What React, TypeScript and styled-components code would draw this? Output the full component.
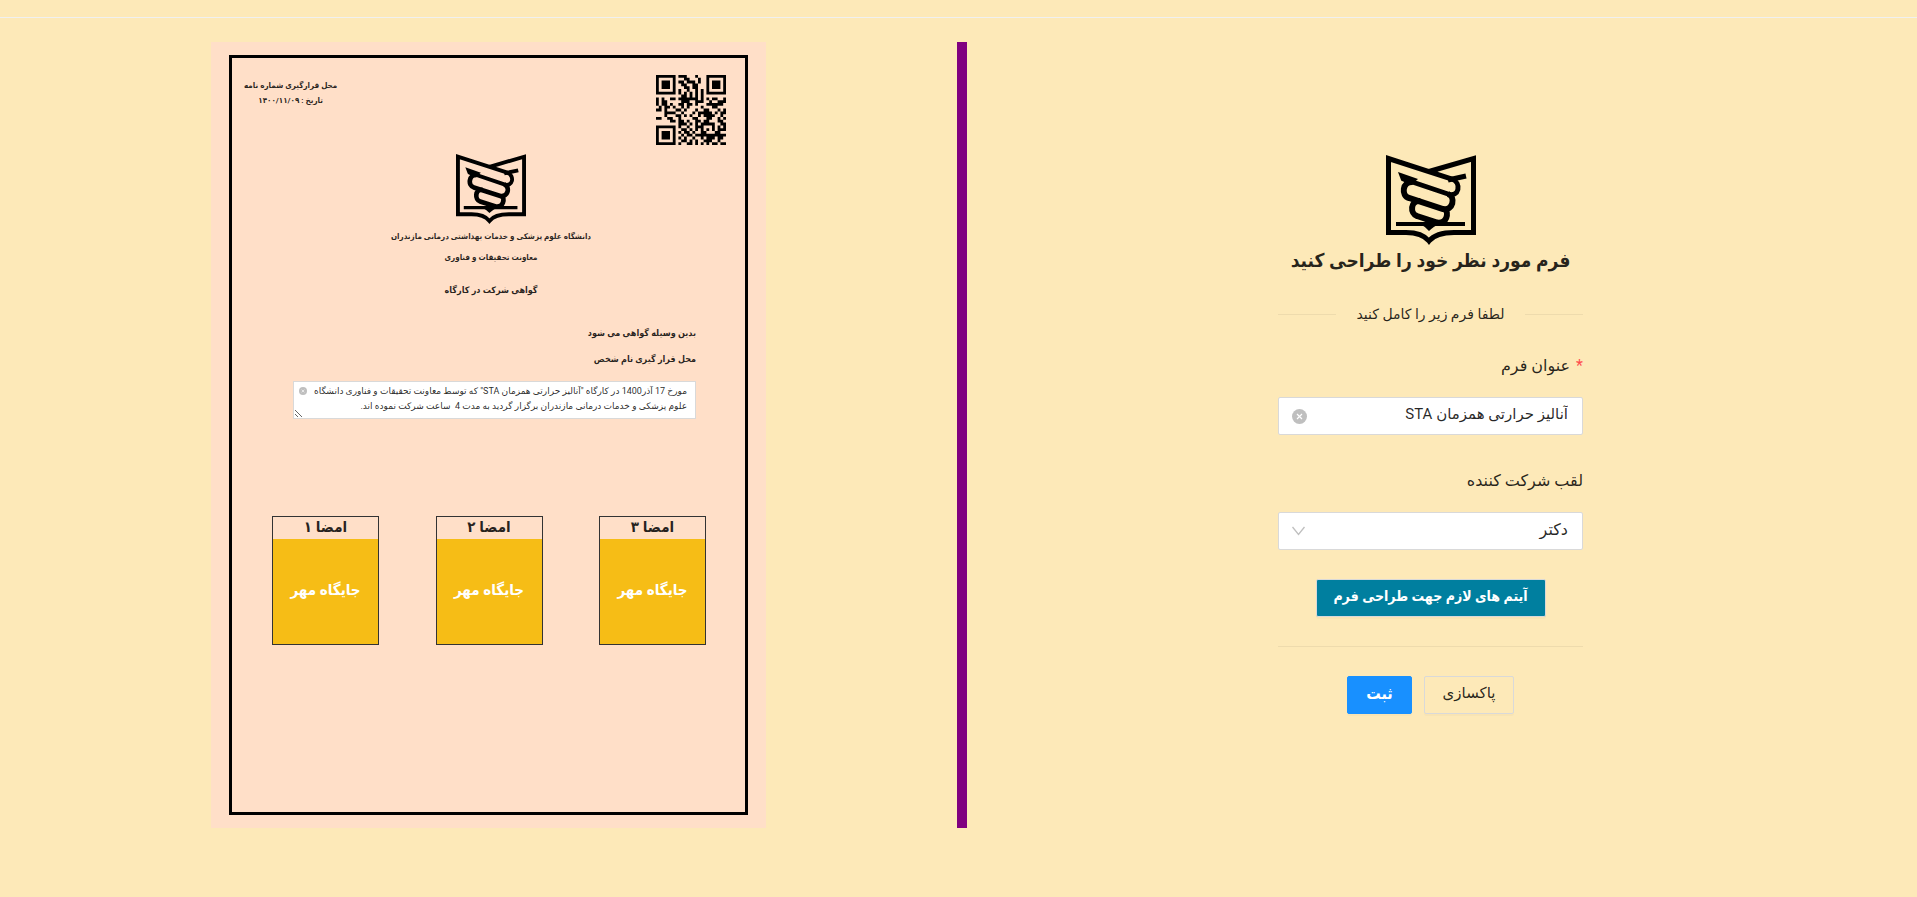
import React from 'react';
import styled, { createGlobalStyle } from 'styled-components';

const boldFont = 'Roboto, "DejaVu Sans Condensed", "DejaVu Sans", sans-serif';

const GlobalStyle = createGlobalStyle`
  *, *::before, *::after { box-sizing: border-box; }
  body {
    margin: 0;
    min-height: 100vh;
    background: #fde9b8;
    color: rgba(0, 0, 0, 0.85);
    font-family: Roboto, "DejaVu Sans", sans-serif;
    font-size: 14px;
  }
  button, input, select, textarea { font-family: inherit; color: inherit; }
`;

const Page = styled.div`
  direction: rtl;
  padding: 17px 0 24px;
`;

const TopRule = styled.hr`
  margin: 0;
  border: 0;
  border-top: 1px solid #f0f0f0;
`;

const Columns = styled.main`
  display: grid;
  grid-template-columns: 1fr 1fr;
  padding: 24px 23px 0 20px;
`;

const FormColumn = styled.section`
  display: flex;
  flex-direction: column;
  align-items: center;
  border-left: 10px solid #800080;
  padding-top: 113px;
`;

const PreviewColumn = styled.section`
  display: flex;
  justify-content: center;
`;

const LogoSvg = styled.svg<{ $size: number }>`
  display: block;
  width: ${(p) => p.$size}px;
  height: ${(p) => p.$size}px;
`;

const Form = styled.form`
  display: flex;
  flex-direction: column;
  align-items: center;
  width: 305px;
`;

const Title = styled.h1`
  margin: 0;
  font-family: ${boldFont};
  font-size: 19px;
  line-height: 32px;
  font-weight: 700;
  white-space: nowrap;
`;

const Divider = styled.div`
  display: flex;
  align-items: center;
  gap: 20px;
  width: 100%;
  margin-top: 25px;
  font-size: 14px;
  line-height: 24px;
  white-space: nowrap;
  &::before, &::after {
    content: "";
    flex: 1;
    border-top: 1px solid rgba(0, 0, 0, 0.06);
  }
`;

const Field = styled.div<{ $gap: number }>`
  display: flex;
  flex-direction: column;
  gap: 19px;
  width: 100%;
  margin-top: ${(p) => p.$gap}px;
`;

const Label = styled.label`
  font-size: 16px;
  line-height: 24px;
`;

const Required = styled.span`
  margin-left: 6px;
  color: #ff4d4f;
`;

const ControlWrap = styled.div`
  position: relative;
`;

const controlBox = `
  display: block;
  width: 100%;
  height: 38px;
  padding: 0 14px 4px;
  border: 1px solid #d9d9d9;
  border-radius: 2px;
  background: #fff;
  outline: none;
`;

const TextInput = styled.input`
  ${controlBox}
  font-size: 15px;
`;

const Select = styled.select`
  ${controlBox}
  font-size: 16px;
  appearance: none;
`;

const ControlIcon = styled.span<{ $top: number; $left: number }>`
  position: absolute;
  top: ${(p) => p.$top}px;
  left: ${(p) => p.$left}px;
  display: flex;
  pointer-events: none;
`;

const Button = styled.button<{ $kind: 'plain' | 'primary' | 'items' }>`
  height: 38px;
  width: ${(p) => ({ plain: 90, primary: 65, items: 230 })[p.$kind]}px;
  padding: 0 0 4px;
  border: 1px solid ${(p) => (p.$kind === 'primary' ? '#1890ff' : '#d9d9d9')};
  border-radius: 2px;
  background: ${(p) => ({ plain: 'transparent', primary: '#1890ff', items: '#007f9f' })[p.$kind]};
  color: ${(p) => (p.$kind === 'plain' ? 'inherit' : '#fff')};
  font-family: ${(p) => (p.$kind === 'plain' ? 'inherit' : boldFont)};
  font-size: ${(p) => ({ plain: 15, primary: 16, items: 14 })[p.$kind]}px;
  font-weight: ${(p) => (p.$kind === 'plain' ? 400 : 700)};
  box-shadow: 0 2px 0 rgba(0, 0, 0, 0.02);
  white-space: nowrap;
`;

const ItemsRow = styled.div`
  margin-top: 29px;
`;

const Rule = styled.hr`
  width: 100%;
  margin: 29px 0;
  border: 0;
  border-top: 1px solid rgba(0, 0, 0, 0.06);
`;

const Actions = styled.div`
  display: flex;
  gap: 12px;
`;

const Paper = styled.article`
  width: 555px;
  min-height: 786px;
  padding: 13px 18px;
  background: #ffdfc8;
  display: flex;
`;

const Frame = styled.div`
  flex: 1;
  display: flex;
  flex-direction: column;
  border: 3px solid #000;
  padding: 17px 19px 0 12px;
  font-family: ${boldFont};
  font-weight: 700;
`;

const LetterHead = styled.header`
  display: flex;
  justify-content: space-between;
  height: 79px;
`;

const QrSvg = styled.svg`
  width: 70px;
  height: 70px;
`;

const LetterMeta = styled.div`
  padding-top: 3px;
  text-align: center;
  font-size: 8px;
  line-height: 15px;
`;

const Center = styled.div`
  display: flex;
  flex-direction: column;
  align-items: center;
  padding-left: 12px;
`;

const Line = styled.p<{ $size?: number; $gap?: number }>`
  margin: ${(p) => p.$gap ?? 0}px 0 0;
  font-size: ${(p) => p.$size ?? 8}px;
  line-height: 16px;
  white-space: nowrap;
`;

const Body = styled.div`
  padding: 27px 30px 0 49px;
`;

const NoteWrap = styled.div`
  position: relative;
  margin-top: 14px;
`;

const Note = styled.textarea`
  display: block;
  width: 100%;
  height: 38px;
  padding: 2px 8px 2px 16px;
  border: 1px solid #d9d9d9;
  background: #fff;
  font-family: Roboto, "DejaVu Sans", sans-serif;
  font-size: 9px;
  line-height: 15px;
  overflow: hidden;
  outline: none;
`;

const Signatures = styled.div`
  display: flex;
  justify-content: space-between;
  padding: 97px 20px 0 28px;
`;

const Signature = styled.figure`
  width: 107px;
  margin: 0;
  border: 1px solid #333;
`;

const SignatureName = styled.figcaption`
  height: 22px;
  font-size: 15px;
  line-height: 20px;
  text-align: center;
`;

const Stamp = styled.div`
  height: 105px;
  background: #f6bd16;
  color: #fff;
  font-size: 15px;
  line-height: 102px;
  text-align: center;
`;

function Logo({ size }: { size: number }) {
  return (
    <LogoSvg $size={size} viewBox="0 0 90 90" fill="none" stroke="#000" strokeWidth="6" aria-hidden="true">
      <path
        d="M43 16.500 L87.500 3.500 V77.500 H68 Q50 77.500 43 86 Q36 77.500 20 77.500 H2.500 V3.500 L66 24 C76 28 73 43 62 39 L16 23.500"
        strokeWidth="5"
      />
      <path d="M12 17 L32 24 L25 30 L15 25 Z" fill="#000" stroke="none" />
      <path d="M62 25 L80 21" strokeWidth="5" />
      <path d="M27 27 C16 26 15 41 23 43 L57 54 C67 56 70 42 62 39" />
      <path d="M34 46 C24 45 24 59 31 61 L51 67.500 C61 69 63 58 59 54" />
      <path d="M10 69 H79" strokeWidth="4" />
      <path d="M34 69 Q40 72 43 76 Q47 72 56 67 L44 64 Z" fill="#000" stroke="none" />
    </LogoSvg>
  );
}

const qrRows = [
  '1111111011100010001111111',
  '1000001000110001001000001',
  '1011101011011101001011101',
  '1011101001100110001011101',
  '1011101000110110001011101',
  '1000001010010010101000001',
  '1111111010101010101111111',
  '0000000001101010100000000',
  '1010011011111110101011001',
  '1011000001110011100100111',
  '1011010011011010001111110',
  '0101101001010000100011000',
  '1101000110100010011000101',
  '0001111001000101111101011',
  '0001000110101001011110010',
  '1100110010000110001100101',
  '0000011011010011011000110',
  '0000000011101010111110011',
  '1111111010010011100010101',
  '1000001001101010101010111',
  '1011101010110100110001100',
  '1011101001011011111111111',
  '1011101010100100101110110',
  '1000001001101010011100100',
  '1111111010011010101011011',
];

function QrCode() {
  return (
    <QrSvg viewBox="0 0 25 25" role="img" aria-label="QR">
      <path
        d={qrRows
          .map((row, y) => row.split('').map((c, x) => (c === '1' ? `M${x} ${y}h1v1h-1z` : '')).join(''))
          .join('')}
      />
    </QrSvg>
  );
}

function ClearIcon({ size }: { size: number }) {
  return (
    <svg width={size} height={size} viewBox="0 0 15 15" aria-hidden="true">
      <circle cx="7.500" cy="7.500" r="7.500" fill="#bfbfbf" />
      <path d="M5 5 L10 10 M10 5 L5 10" stroke="#fff" strokeWidth="1.200" />
    </svg>
  );
}

const signatures = ['امضا ۳', 'امضا ۲', 'امضا ۱'];

const noteText =
  'مورخ 17 آذر1400 در کارگاه "آنالیز حرارتی همزمان STA" که توسط معاونت تحقیقات و فناوری دانشگاه\nعلوم پزشکی و خدمات درمانی مازندران برگزار گردید به مدت 4  ساعت شرکت نموده اند.';

export default function App() {
  return (
    <>
      <GlobalStyle />
      <Page lang="fa">
        <TopRule />
        <Columns>
          <FormColumn>
            <Logo size={90} />
            <Form onSubmit={(e) => e.preventDefault()}>
              <Title>فرم مورد نظر خود را طراحی کنید</Title>
              <Divider>لطفا فرم زیر را کامل کنید</Divider>
              <Field $gap={28}>
                <Label htmlFor="form-title">
                  <Required>*</Required>
                  عنوان فرم
                </Label>
                <ControlWrap>
                  <TextInput id="form-title" defaultValue="آنالیز حرارتی همزمان STA" />
                  <ControlIcon $top={12} $left={14}>
                    <ClearIcon size={15} />
                  </ControlIcon>
                </ControlWrap>
              </Field>
              <Field $gap={34}>
                <Label htmlFor="participant-title">لقب شرکت کننده</Label>
                <ControlWrap>
                  <Select id="participant-title" defaultValue="دکتر">
                    <option>دکتر</option>
                  </Select>
                  <ControlIcon $top={14} $left={14}>
                    <svg width="13" height="10" viewBox="0 0 13 10" fill="none" stroke="#bfbfbf" aria-hidden="true">
                      <path d="M0.500 1 L6.500 8.500 L12.500 1" strokeWidth="1.300" />
                    </svg>
                  </ControlIcon>
                </ControlWrap>
              </Field>
              <ItemsRow>
                <Button type="button" $kind="items">آیتم های لازم جهت طراحی فرم</Button>
              </ItemsRow>
              <Rule />
              <Actions>
                <Button type="reset" $kind="plain">پاکسازی</Button>
                <Button type="submit" $kind="primary">ثبت</Button>
              </Actions>
            </Form>
          </FormColumn>
          <PreviewColumn>
            <Paper>
              <Frame>
                <LetterHead>
                  <QrCode />
                  <LetterMeta>
                    <div>محل قرارگیری شماره نامه</div>
                    <div>تاریخ : ۱۴۰۰/۱۱/۰۹</div>
                  </LetterMeta>
                </LetterHead>
                <Center>
                  <Logo size={70} />
                  <Line $gap={5}>دانشگاه علوم پزشکی و خدمات بهداشتی درمانی مازندران</Line>
                  <Line $gap={5}>معاونت تحقیقات و فناوری</Line>
                  <Line $size={9} $gap={16}>گواهی شرکت در کارگاه</Line>
                </Center>
                <Body>
                  <Line $size={9}>بدین وسیله گواهی می شود</Line>
                  <Line $size={9} $gap={10}>محل قرار گیری نام شخص</Line>
                  <NoteWrap>
                    <Note aria-label="متن گواهی" defaultValue={noteText} />
                    <ControlIcon $top={6} $left={6}>
                      <ClearIcon size={8} />
                    </ControlIcon>
                  </NoteWrap>
                </Body>
                <Signatures>
                  {signatures.map((name) => (
                    <Signature key={name}>
                      <SignatureName>{name}</SignatureName>
                      <Stamp>جایگاه مهر</Stamp>
                    </Signature>
                  ))}
                </Signatures>
              </Frame>
            </Paper>
          </PreviewColumn>
        </Columns>
      </Page>
    </>
  );
}
